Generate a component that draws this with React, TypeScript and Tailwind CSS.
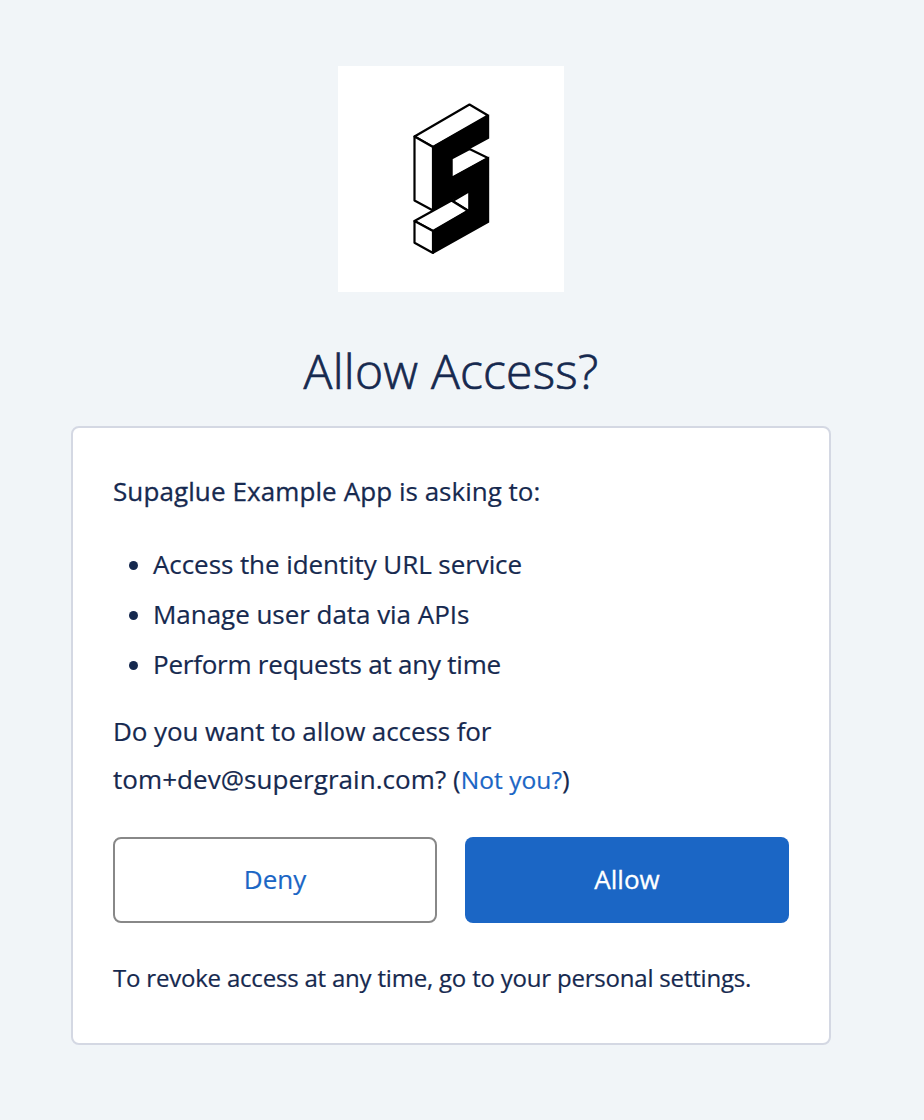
import React from "react";

const permissions = [
  { label: "Access the identity URL service", tracking: "tracking-[-0.08px]" },
  { label: "Manage user data via APIs", tracking: "tracking-[-0.04px]" },
  { label: "Perform requests at any time", tracking: "tracking-[-0.23px]" },
];

function Logo() {
  return (
    <svg width="226" height="226" viewBox="338 66 226 226" className="block bg-white">
      <g stroke="#000" strokeWidth="2.2" strokeLinejoin="round">
        <path d="M414.5 136.5L469.5 104.5L488 115.5L433 147Z" fill="#fff" />
        <path d="M414.5 136.5L433 147V210.5L414.5 200.5Z" fill="#fff" />
        <path d="M451.5 158.5L469.5 149L488 158L451.5 178Z" fill="#fff" />
        <path d="M452.5 201L469.5 191V211.5Z" fill="#fff" />
        <path d="M414.5 221L451.5 200.5L468 210.8L433 231Z" fill="#fff" />
        <path d="M414.5 221L433 231V253L414.5 242.8Z" fill="#fff" />
      </g>
      <path d="M432 146.5L489.2 114.5V138.5L452.3 158.5V176.8L489.2 156.5V222.5L433 254L432.3 230.8L468.5 209.5V191.5L432 211.5Z" fill="#000" />
    </svg>
  );
}

export default function App() {
  return (
    <main className="flex h-[1120px] w-[924px] flex-col items-start bg-[#f1f5f8] pl-[71px] pt-[66px] font-['Open_Sans',sans-serif] text-[#16294f]">
      <div className="flex w-[760px] flex-col items-center">
        <Logo />
        <h1 className="mt-[47px] h-[64px] whitespace-nowrap text-[48px] font-light leading-[64px] tracking-[0.25px] [-webkit-text-stroke:0.7px_#16294f]">Allow Access?</h1>
        <section className="mt-[23px] h-[619px] w-[760px] rounded-[8px] border-2 border-[#d4d8e3] bg-white px-10 pt-[38px] text-[26px] leading-[50px] [-webkit-text-stroke:0.2px]">
          <p className="whitespace-nowrap">
            <span className="tracking-[0.1px] [-webkit-text-stroke:0.3px]">Supaglue Example App</span> is asking to:
          </p>
          <ul className="mt-[23px]">
            {permissions.map(({ label, tracking }) => (
              <li key={label} className="flex h-[50px] items-center whitespace-nowrap pl-[16px]">
                <span className="mr-[15px] mt-[2px] size-[9px] shrink-0 rounded-full bg-[#16294f]" />
                <span className={tracking}>{label}</span>
              </li>
            ))}
          </ul>
          <p className="mt-[18px] whitespace-nowrap leading-[48px]">
            <span className="tracking-[-0.1px]">Do you want to allow access for</span>
            <br />
            <span className="tracking-[0.05px]">tom+dev@supergrain.com? (</span>
            <a href="#" className="text-[24.5px] tracking-[0.06px] text-[#1b66c5]">Not you?</a>)
          </p>
          <div className="mt-[33px] flex gap-7">
            <button className="h-[86px] w-[324px] rounded-[8px] border-2 border-[#888] pb-[3px] text-[#1b66c5]">Deny</button>
            <button className="h-[86px] w-[324px] rounded-[8px] bg-[#1b66c5] pb-[3px] text-white [-webkit-text-stroke:0.3px]">Allow</button>
          </div>
          <p className="mt-[30px] whitespace-nowrap text-[24px] tracking-[-0.2px]">To revoke access at any time, go to your personal settings.</p>
        </section>
      </div>
    </main>
  );
}
